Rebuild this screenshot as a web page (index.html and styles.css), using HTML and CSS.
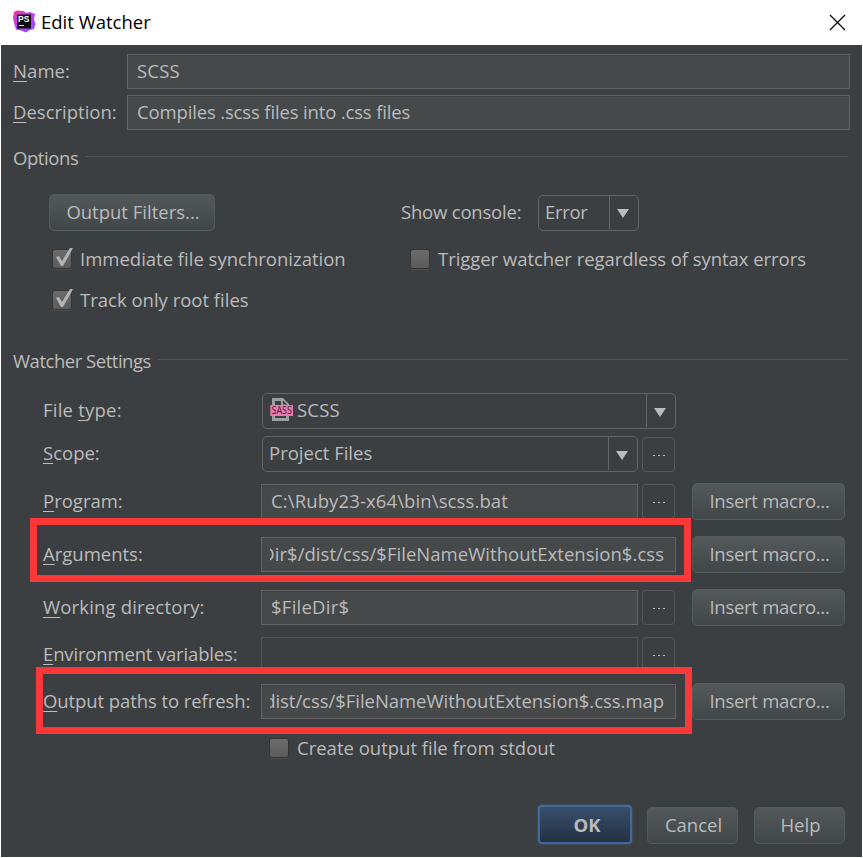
FILE: index.html
```
<!DOCTYPE html>
<html lang="en">
<head>
<meta charset="utf-8">
<title>Edit Watcher</title>
<link rel="stylesheet" href="styles.css">
</head>
<body>
<div class="window">
  <header class="titlebar">
    <svg class="app-icon" width="24" height="24" viewBox="0 0 24 24">
      <defs>
        <linearGradient id="ps" x1="0" y1="0" x2=".8" y2="1">
          <stop offset="0" stop-color="#fc318c"/><stop offset=".35" stop-color="#d63ae0"/><stop offset="1" stop-color="#8b52fb"/>
        </linearGradient>
      </defs>
      <path fill="url(#ps)" d="M2 2 5 .5l7 .5 2 2 4-1 5 2-1 5 1.500 5-1.500 5-4 1-4 2.500-5-2-5-1L2 13 1 8z"/>
      <rect x="5" y="4.500" width="14" height="14" fill="#0d0a12"/>
      <text class="app-icon-text" x="6" y="12">PS</text>
      <rect x="7" y="15" width="5" height="1" fill="#ddd"/>
    </svg>
    <h1 class="title">Edit Watcher</h1>
    <svg class="close" width="17" height="17" viewBox="0 0 17 17"><path d="M1 1 16 16M16 1 1 16" stroke="#000" stroke-width="1.200"/></svg>
  </header>
  <main class="content">
    <div class="row top-row"><label class="top-label ls-name"><u>N</u>ame:</label><div class="field grow ls-scss">SCSS</div></div>
    <div class="row top-row"><label class="top-label"><u>D</u>escription:</label><div class="field grow ls-compiles">Compiles .scss files into .css files</div></div>

    <div class="section options-head"><span class="ls-options">Options</span><hr></div>
    <div class="row output-row">
      <button class="btn filters">Output Filters...</button>
      <span class="console-label ls-console">Show console:</span>
      <div class="combo error"><span class="combo-text ls-error">Error</span><span class="arrow"></span></div>
    </div>
    <div class="row check-row">
      <span class="check on"></span><span class="check-text first-text ls-imm">Immediate file synchronization</span>
      <span class="check"></span><span class="check-text ls-trigger">Trigger watcher regardless of syntax errors</span>
    </div>
    <div class="row check-row second"><span class="check on"></span><span class="check-text">Track only root files</span></div>

    <div class="section watcher-head"><span class="ls-watcher">Watcher Settings</span><hr></div>
    <div class="settings">
      <div class="row set-row type-row">
        <label class="set-label ls-type">File <u>t</u>ype:</label>
        <div class="combo wide">
          <svg class="file-icon" width="24" height="24" viewBox="0 0 24 24">
            <path fill="#9b9d9e" d="M2 0h11l6 6v17H2z"/>
            <path fill="#3c3f41" d="M5 3h6v6h5v11H5zM13 2.500v4h4z"/>
            <rect x="0.300" y="7" width="22.700" height="11" fill="#ec79ae"/>
            <text class="file-icon-text" x="1.500" y="16.300" textLength="20.500" lengthAdjust="spacingAndGlyphs">SASS</text>
          </svg>
          <span class="combo-text ls-scss">SCSS</span><span class="arrow"></span>
        </div>
      </div>
      <div class="row set-row scope-row">
        <label class="set-label"><u>S</u>cope:</label>
        <div class="combo scope"><span class="combo-text">Project Files</span><span class="arrow"></span></div>
        <button class="dots"><i></i><i></i><i></i></button>
      </div>
      <div class="row set-row program-row">
        <label class="set-label"><u>P</u>rogram:</label>
        <div class="field set-field ls-ruby">C:\Ruby23-x64\bin\scss.bat</div>
        <button class="dots"><i></i><i></i><i></i></button>
        <button class="btn macro">Insert macro...</button>
      </div>
      <div class="row set-row args-row">
        <label class="set-label"><u>A</u>rguments:</label>
        <div class="field long-field"><span class="clip ls-args">Dir$/dist/css/$FileNameWithoutExtension$.css</span></div>
        <button class="btn macro">Insert macro...</button>
      </div>
      <div class="row set-row dir-row">
        <label class="set-label ls-dir"><u>W</u>orking directory:</label>
        <div class="field set-field ls-filedir">$FileDir$</div>
        <button class="dots"><i></i><i></i><i></i></button>
        <button class="btn macro">Insert macro...</button>
      </div>
      <div class="row set-row env-row">
        <label class="set-label ls-env"><u>E</u>nvironment variables:</label>
        <div class="field set-field disabled"></div>
        <button class="dots"><i></i><i></i><i></i></button>
      </div>
      <div class="row set-row out-row">
        <label class="set-label ls-out"><u>O</u>utput paths to refresh:</label>
        <div class="field long-field"><span class="clip ls-map">dist/css/$FileNameWithoutExtension$.css.map</span></div>
        <button class="btn macro">Insert macro...</button>
      </div>
      <div class="row stdout-row"><span class="check"></span><span class="check-text">Create output file from stdout</span></div>
    </div>
    <footer class="row actions">
      <button class="btn ok">OK</button>
      <button class="btn cancel">Cancel</button>
      <button class="btn help">Help</button>
    </footer>
  </main>
  <div class="mark mark-args"></div>
  <div class="mark mark-out"></div>
</div>
</body>
</html>
```
FILE: styles.css
```
* { box-sizing: border-box; }
body { margin: 0; background: #fff; font: 18.5px/26px "Open Sans", "Noto Sans", sans-serif; color: #bbb; overflow: hidden; }
.window { position: relative; width: 863px; height: 858px; padding: 0 1px 1px; white-space: nowrap; }
.titlebar { display: flex; align-items: center; height: 45px; padding: 0 16px 0 11px; color: #000; }
.app-icon { flex: none; margin-bottom: 1px; }
.app-icon-text { font: bold 8.5px "Liberation Sans", sans-serif; fill: #fff; }
.title { flex: 1; margin: 0 0 0 5px; padding-bottom: 2px; font-size: 18.5px; font-weight: 400; }
.close { flex: none; }
.content { height: 812px; background: #3c3f41; padding: 9px 12px 0; }
.row { display: flex; align-items: center; }
u { text-decoration: underline; text-decoration-thickness: 1px; text-underline-offset: 3px; text-decoration-skip-ink: none; }

.top-row { height: 35px; margin-bottom: 6px; }
.top-label { width: 114px; padding-bottom: 2px; }
.field { height: 35px; border: 1px solid #646464; background: #45494a; box-shadow: inset 0 1px #3d4041; padding: 0 9px; line-height: 31px; }
.grow { flex: 1; }

.section { display: flex; align-items: center; gap: 7px; height: 26px; padding-right: 2px; }
.section hr { flex: 1; height: 1px; margin: 0 0 4px; border: 0; background: #515355; }
.options-head { margin-top: 15px; }
.output-row { height: 37px; margin-top: 23px; padding-left: 36px; }
.btn { display: flex; align-items: center; justify-content: center; flex: none; height: 37px; padding: 0 0 2px; border: 1px solid #555a5c; border-radius: 5px; background: linear-gradient(#53585a, #414648); font: inherit; color: #bbb; }
.filters { width: 166px; padding-left: 2px; }
.console-label { width: 137px; margin-left: 186px; padding-bottom: 2px; }
.combo { display: flex; align-items: stretch; flex: none; height: 36px; border: 1px solid #646464; border-radius: 5px; line-height: 32px; }
.combo-text { flex: 1; padding-left: 6px; }
.arrow { display: flex; width: 29px; margin-bottom: 1px; border-left: 1px solid #646464; align-items: center; justify-content: center; }
.arrow::after { content: ""; border: 6px solid transparent; border-top: 9px solid #bbb; border-bottom: 0; margin: 3px 2px 0 0; }
.error { width: 101px; }

.check-row { height: 26px; margin-top: 15px; padding-left: 39px; }
.check { position: relative; flex: none; width: 20px; height: 20px; border: 1px solid #353535; border-radius: 3px; background: linear-gradient(#6b6b6b, #5b5b5b); box-shadow: 0 1px #4b4d4e; }
.on::after { content: ""; position: absolute; left: 2px; top: -2px; width: 18px; height: 19px; background: #b4b4b4; clip-path: polygon(1px 9px, 4px 8px, 7px 13px, 15px 0, 18px 0, 8px 18px, 6px 18px); }
.check-text { margin-left: 8px; }
.first-text { width: 330px; }

.watcher-head { margin-top: 35px; }
.settings { padding-left: 30px; }
.set-label { flex: none; width: 218px; padding-bottom: 2px; }
.set-row .combo { margin-left: 1px; }
.type-row { height: 36px; margin-top: 19px; }
.scope-row { height: 36px; margin-top: 7px; }
.program-row { height: 37px; margin-top: 11px; }
.args-row, .dir-row { height: 37px; margin-top: 16px; }
.env-row { height: 35px; margin-top: 11px; }
.out-row { height: 37px; margin-top: 11px; }
.wide { width: 414px; }
.wide .combo-text { padding-left: 3px; }
.scope { width: 376px; }
.file-icon { flex: none; margin: 4px 0 0 7px; }
.file-icon-text { font: 11.5px "Open Sans", sans-serif; fill: #3f2431; }
.set-field { flex: none; width: 377px; }
.long-field { flex: none; width: 415px; padding: 0 11px 0 8px; margin-right: 16px; }
.clip { display: flex; justify-content: flex-end; overflow: hidden; }
.disabled { border-color: #515456; background: #3c3f41; box-shadow: none; }
.dots { display: flex; align-items: center; justify-content: center; gap: 3px; flex: none; width: 33px; height: 35px; margin: 0 17px 0 4px; padding: 2px 0 0 1px; border: 1px solid #555758; border-radius: 4px; background: none; }
.dots i { width: 2px; height: 1px; background: #bbb; }
.macro { width: 153px; padding-left: 2px; letter-spacing: -.28px; }
.stdout-row { height: 26px; margin-top: 15px; padding-left: 226px; }

.actions { height: 39px; margin: 44px 4px 0 525px; align-items: flex-end; }
.ok { width: 94px; height: 39px; border: 2px solid #43699a; border-radius: 4px; background: linear-gradient(#384f6b, #233143); box-shadow: 0 0 2px #466d94; font-weight: 700; padding: 0 0 0 4px; }
.cancel { width: 91px; margin-left: 15px; padding-left: 2px; }
.help { width: 91px; margin-left: 16px; padding-left: 2px; }

.ls-name { letter-spacing: .08px; }
.ls-scss { letter-spacing: .22px; }
.ls-compiles { letter-spacing: -.15px; }
.ls-options { letter-spacing: -.42px; }
.ls-console { letter-spacing: -.2px; }
.ls-error { letter-spacing: -.3px; }
.ls-trigger { letter-spacing: -.05px; }
.ls-watcher { letter-spacing: -.48px; }
.ls-type { letter-spacing: .22px; }
.ls-ruby { letter-spacing: .12px; }
.ls-args { letter-spacing: .04px; }
.ls-dir { letter-spacing: .17px; }
.ls-filedir { letter-spacing: .25px; }
.ls-env { letter-spacing: -.16px; }
.ls-out { letter-spacing: -.08px; }
.ls-map { letter-spacing: -.04px; }

/* Red highlight frames laid over the form */
.mark { position: absolute; border: 7px solid #fc3737; pointer-events: none; }
.mark-args { left: 30px; top: 518px; width: 661px; height: 64px; }
.mark-out { left: 36px; top: 667px; width: 656px; height: 67px; }
```
